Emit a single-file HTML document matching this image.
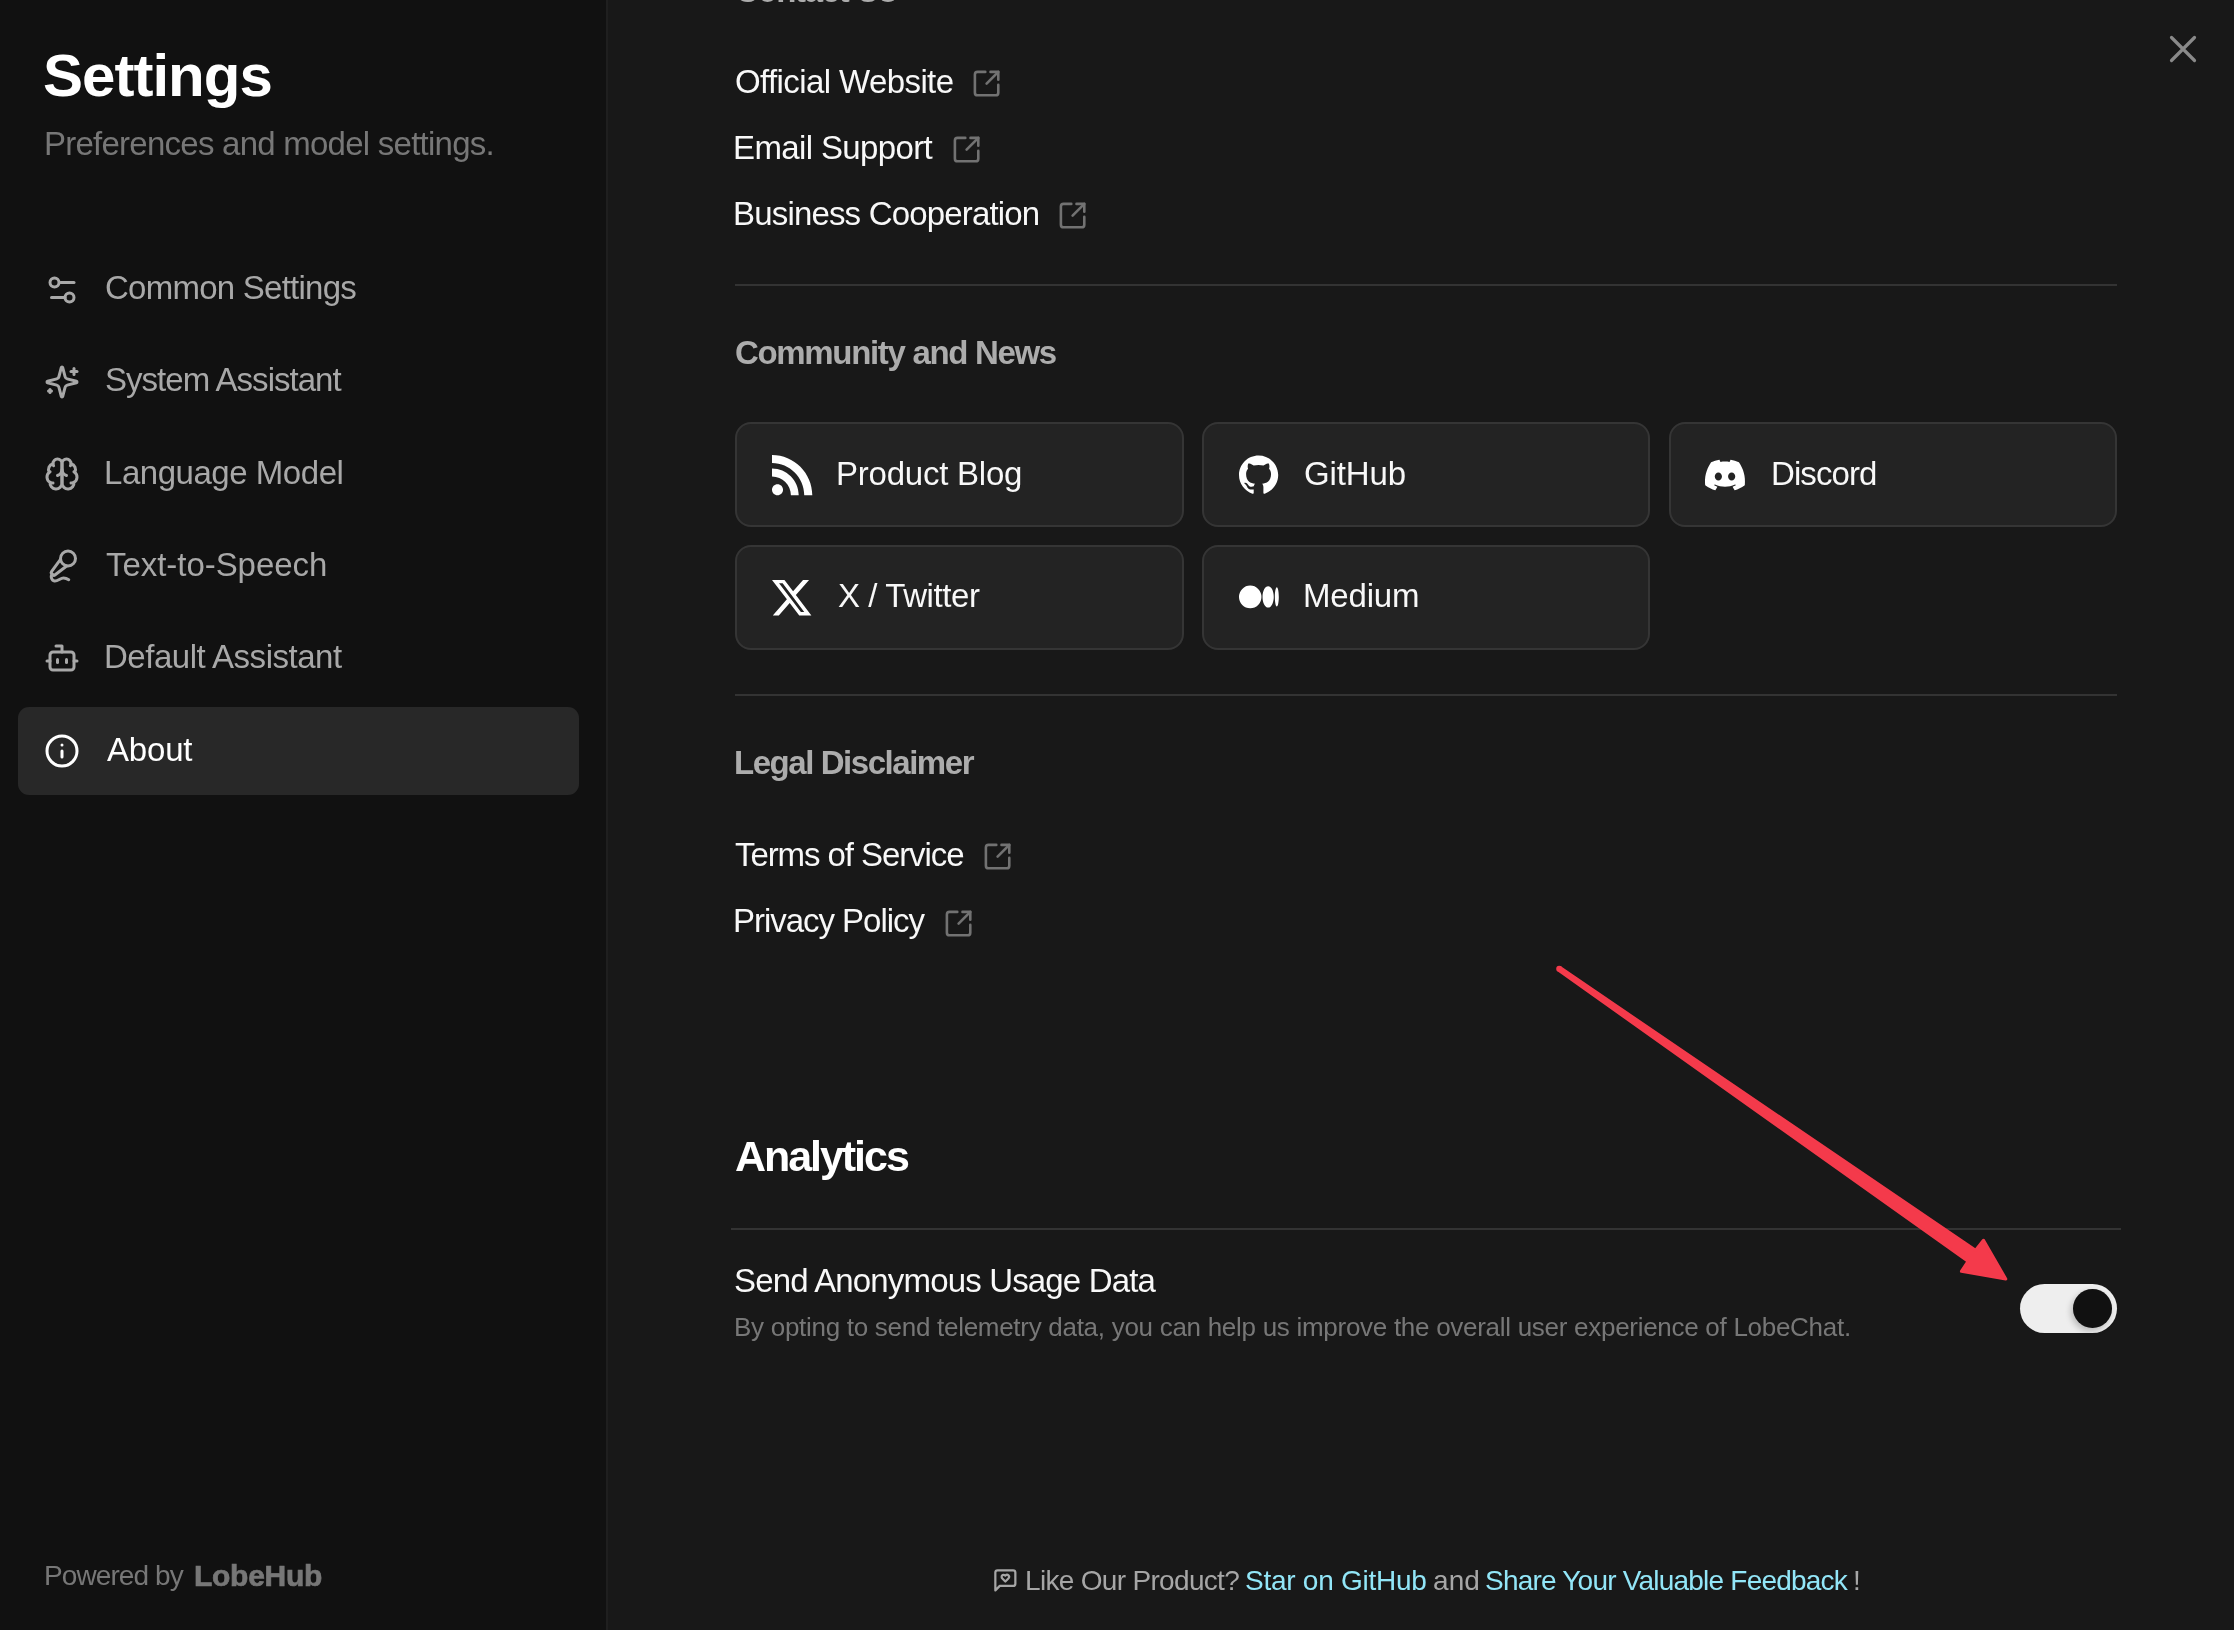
<!DOCTYPE html>
<html><head><meta charset="utf-8"><title>Settings</title>
<style>
html,body{margin:0;padding:0;width:2234px;height:1630px;overflow:hidden;background:#181818}
body{position:relative;font-family:"Liberation Sans",sans-serif}
.r{position:absolute}
.i{position:absolute;overflow:visible}
.t{position:absolute;white-space:nowrap;line-height:1;will-change:transform}
</style></head><body>
<div class="r" style="left:0;top:0;width:606px;height:1630px;background:#111111"></div>
<div class="r" style="left:606px;top:0;width:2px;height:1630px;background:#1f1f1f"></div>
<div class="t" style="left:42.90px;top:45.80px;font-size:60px;letter-spacing:-0.986px;color:#ffffff;font-weight:700;">Settings</div>
<div class="t" style="left:43.50px;top:127.05px;font-size:33px;letter-spacing:-0.753px;color:#777777;">Preferences and model settings.</div>
<div class="r" style="left:18px;top:707px;width:561px;height:88px;background:#282828;border-radius:11px"></div>
<svg class="i" style="left:43.6px;top:271.5px;" width="36.0" height="36.0" viewBox="0 0 24 24" fill="none" stroke="#a8a8a8" stroke-width="2" stroke-linecap="round" stroke-linejoin="round"><path d="M20 7h-9"/><path d="M14 17H5"/><circle cx="17" cy="17" r="3"/><circle cx="7" cy="7" r="3"/></svg>
<div class="t" style="left:104.90px;top:270.95px;font-size:33px;letter-spacing:-0.750px;color:#a8a8a8;">Common Settings</div>
<svg class="i" style="left:43.6px;top:363.7px;" width="36.0" height="36.0" viewBox="0 0 24 24" fill="none" stroke="#a8a8a8" stroke-width="2" stroke-linecap="round" stroke-linejoin="round"><path d="M9.937 15.5A2 2 0 0 0 8.5 14.063l-6.135-1.582a.5.5 0 0 1 0-.962L8.5 9.936A2 2 0 0 0 9.937 8.5l1.582-6.135a.5.5 0 0 1 .963 0L14.063 8.5A2 2 0 0 0 15.5 9.937l6.135 1.581a.5.5 0 0 1 0 .964L15.5 14.063a2 2 0 0 0-1.437 1.437l-1.582 6.135a.5.5 0 0 1-.963 0z"/><path d="M20 3v4"/><path d="M22 5h-4"/><path d="M4 17v2"/><path d="M5 18H3"/></svg>
<div class="t" style="left:104.90px;top:363.30px;font-size:33px;letter-spacing:-0.973px;color:#a8a8a8;">System Assistant</div>
<svg class="i" style="left:43.6px;top:455.9px;" width="36.0" height="36.0" viewBox="0 0 24 24" fill="none" stroke="#a8a8a8" stroke-width="2" stroke-linecap="round" stroke-linejoin="round"><path d="M12 5a3 3 0 1 0-5.997.125 4 4 0 0 0-2.526 5.77 4 4 0 0 0 .556 6.588A4 4 0 1 0 12 18Z"/><path d="M12 5a3 3 0 1 1 5.997.125 4 4 0 0 1 2.526 5.77 4 4 0 0 1-.556 6.588A4 4 0 1 1 12 18Z"/><path d="M15 13a4.5 4.5 0 0 1-3-4 4.5 4.5 0 0 1-3 4"/><path d="M17.599 6.5a3 3 0 0 0 .399-1.375"/><path d="M6.003 5.125A3 3 0 0 0 6.401 6.5"/><path d="M3.477 10.896a4 4 0 0 1 .585-.396"/><path d="M19.938 10.5a4 4 0 0 1 .585.396"/><path d="M6 18a4 4 0 0 1-1.967-.516"/><path d="M19.967 17.484A4 4 0 0 1 18 18"/></svg>
<div class="t" style="left:103.90px;top:455.65px;font-size:33px;letter-spacing:-0.462px;color:#a8a8a8;">Language Model</div>
<svg class="i" style="left:43.6px;top:548.1px;" width="36.0" height="36.0" viewBox="0 0 24 24" fill="none" stroke="#a8a8a8" stroke-width="2" stroke-linecap="round" stroke-linejoin="round"><path d="m11 7.601-5.994 8.19a1 1 0 0 0 .1 1.298l.817.818a1 1 0 0 0 1.314.087L15.09 12"/><path d="M16.5 21.174C15.5 20.5 14.372 20 13 20c-2.058 0-3.928 2.356-6 2-2.072-.356-2.775-3.369-1.5-4.5"/><circle cx="16" cy="7" r="5"/></svg>
<div class="t" style="left:105.90px;top:548.00px;font-size:33px;letter-spacing:-0.046px;color:#a8a8a8;">Text-to-Speech</div>
<svg class="i" style="left:43.6px;top:640.3px;" width="36.0" height="36.0" viewBox="0 0 24 24" fill="none" stroke="#a8a8a8" stroke-width="2" stroke-linecap="round" stroke-linejoin="round"><path d="M12 8V4H8"/><rect width="16" height="12" x="4" y="8" rx="2"/><path d="M2 14h2"/><path d="M20 14h2"/><path d="M15 13v2"/><path d="M9 13v2"/></svg>
<div class="t" style="left:103.90px;top:640.35px;font-size:33px;letter-spacing:-0.481px;color:#a8a8a8;">Default Assistant</div>
<svg class="i" style="left:43.6px;top:732.5px;" width="36.0" height="36.0" viewBox="0 0 24 24" fill="none" stroke="#ffffff" stroke-width="2" stroke-linecap="round" stroke-linejoin="round"><circle cx="12" cy="12" r="10"/><path d="M12 16v-4"/><path d="M12 8h.01"/></svg>
<div class="t" style="left:106.90px;top:732.70px;font-size:33px;letter-spacing:-0.175px;color:#ffffff;">About</div>
<div class="t" style="left:43.80px;top:1562.20px;font-size:28px;letter-spacing:-0.900px;color:#777777;">Powered by</div>
<div class="t" style="left:193.70px;top:1560.50px;font-size:30px;letter-spacing:-0.267px;color:#777777;font-weight:700;-webkit-text-stroke:0.7px #777777;">LobeHub</div>
<div class="r" style="left:608px;top:0;width:1626px;height:1630px;background:#181818"></div>
<svg class="i" style="left:2160px;top:26px" width="46" height="46" viewBox="0 0 46 46" stroke="#8a8a8a" stroke-width="3.2" stroke-linecap="round"><path d="M11.5 11.5 34.5 34.5M34.5 11.5 11.5 34.5"/></svg>
<div class="t" style="left:735.10px;top:-26.05px;font-size:33px;letter-spacing:-1.344px;color:#acacac;font-weight:700;">Contact Us</div>
<div class="t" style="left:735.40px;top:65.15px;font-size:33px;letter-spacing:-0.600px;color:#f8f8f8;">Official Website</div>
<svg class="i" style="left:970.9px;top:68.2px;" width="31.2" height="31.2" viewBox="0 0 24 24" fill="none" stroke="#727272" stroke-width="2" stroke-linecap="round" stroke-linejoin="round"><path d="M21 13v6a2 2 0 0 1-2 2H5a2 2 0 0 1-2-2V5a2 2 0 0 1 2-2h6"/><path d="m21 3-9 9"/><path d="M15 3h6v6"/></svg>
<div class="t" style="left:733.40px;top:131.35px;font-size:33px;letter-spacing:-0.633px;color:#f8f8f8;">Email Support</div>
<svg class="i" style="left:950.8px;top:134.4px;" width="31.2" height="31.2" viewBox="0 0 24 24" fill="none" stroke="#727272" stroke-width="2" stroke-linecap="round" stroke-linejoin="round"><path d="M21 13v6a2 2 0 0 1-2 2H5a2 2 0 0 1-2-2V5a2 2 0 0 1 2-2h6"/><path d="m21 3-9 9"/><path d="M15 3h6v6"/></svg>
<div class="t" style="left:733.40px;top:197.15px;font-size:33px;letter-spacing:-0.826px;color:#f8f8f8;">Business Cooperation</div>
<svg class="i" style="left:1057.4px;top:200.2px;" width="31.2" height="31.2" viewBox="0 0 24 24" fill="none" stroke="#727272" stroke-width="2" stroke-linecap="round" stroke-linejoin="round"><path d="M21 13v6a2 2 0 0 1-2 2H5a2 2 0 0 1-2-2V5a2 2 0 0 1 2-2h6"/><path d="m21 3-9 9"/><path d="M15 3h6v6"/></svg>
<div class="r" style="left:735px;top:284px;width:1382px;height:2px;background:#333333"></div>
<div class="t" style="left:735.10px;top:335.75px;font-size:33px;letter-spacing:-1.329px;color:#acacac;font-weight:700;">Community and News</div>
<div class="r" style="left:735px;top:422px;width:448.5px;height:105px;background:#232323;border:2px solid #353535;border-radius:16px;box-sizing:border-box"></div>
<svg class="i" style="left:771.6px;top:454.6px;" width="40.3" height="40.3" viewBox="0 0 24 24" fill="#ffffff" ><path d="M19.199 24C19.199 13.467 10.533 4.8 0 4.8V0c13.165 0 24 10.835 24 24h-4.801zM3.291 17.415c1.814 0 3.293 1.479 3.293 3.295 0 1.813-1.485 3.29-3.301 3.29C1.47 24 0 22.526 0 20.71s1.475-3.294 3.291-3.295zM15.909 24h-4.665c0-6.169-5.075-11.245-11.244-11.245V8.09c8.727 0 15.909 7.184 15.909 15.91z"/></svg>
<div class="t" style="left:836.00px;top:457.15px;font-size:33px;letter-spacing:-0.227px;color:#f8f8f8;">Product Blog</div>
<div class="r" style="left:1201.5px;top:422px;width:448.5px;height:105px;background:#232323;border:2px solid #353535;border-radius:16px;box-sizing:border-box"></div>
<svg class="i" style="left:1239.0px;top:455.0px;" width="39.2" height="39.2" viewBox="0 0 24 24" fill="#ffffff" ><path d="M12 .297c-6.63 0-12 5.373-12 12 0 5.303 3.438 9.8 8.205 11.385.6.113.82-.258.82-.577 0-.285-.01-1.04-.015-2.04-3.338.724-4.042-1.61-4.042-1.61C4.422 18.07 3.633 17.7 3.633 17.7c-1.087-.744.084-.729.084-.729 1.205.084 1.838 1.236 1.838 1.236 1.07 1.835 2.809 1.305 3.495.998.108-.776.417-1.305.76-1.605-2.665-.3-5.466-1.332-5.466-5.93 0-1.31.465-2.38 1.235-3.22-.135-.303-.54-1.523.105-3.176 0 0 1.005-.322 3.3 1.23.96-.267 1.98-.399 3-.405 1.02.006 2.04.138 3 .405 2.28-1.552 3.285-1.23 3.285-1.23.645 1.653.24 2.873.12 3.176.765.84 1.23 1.91 1.23 3.22 0 4.61-2.805 5.625-5.475 5.92.42.36.81 1.096.81 2.22 0 1.606-.015 2.896-.015 3.286 0 .315.21.69.825.57C20.565 22.092 24 17.592 24 12.297c0-6.627-5.373-12-12-12"/></svg>
<div class="t" style="left:1303.50px;top:457.15px;font-size:33px;letter-spacing:-0.140px;color:#f8f8f8;">GitHub</div>
<div class="r" style="left:1668.5px;top:422px;width:448.5px;height:105px;background:#232323;border:2px solid #353535;border-radius:16px;box-sizing:border-box"></div>
<svg class="i" style="left:1704.8px;top:454.5px;" width="40.0" height="40.0" viewBox="0 0 24 24" fill="#ffffff" ><path d="M20.317 4.3698a19.7913 19.7913 0 00-4.8851-1.5152.0741.0741 0 00-.0785.0371c-.211.3753-.4447.8648-.6083 1.2495-1.8447-.2762-3.68-.2762-5.4868 0-.1636-.3933-.4058-.8742-.6177-1.2495a.077.077 0 00-.0785-.037 19.7363 19.7363 0 00-4.8852 1.515.0699.0699 0 00-.0321.0277C.5334 9.0458-.319 13.5799.0992 18.0578a.0824.0824 0 00.0312.0561c2.0528 1.5076 4.0413 2.4228 5.9929 3.0294a.0777.0777 0 00.0842-.0276c.4616-.6304.8731-1.2952 1.226-1.9942a.076.076 0 00-.0416-.1057c-.6528-.2476-1.2743-.5495-1.8722-.8923a.077.077 0 01-.0076-.1277c.1258-.0943.2517-.1923.3718-.2914a.0743.0743 0 01.0776-.0105c3.9278 1.7933 8.18 1.7933 12.0614 0a.0739.0739 0 01.0785.0095c.1202.099.246.1981.3728.2924a.077.077 0 01-.0066.1276 12.2986 12.2986 0 01-1.873.8914.0766.0766 0 00-.0407.1067c.3604.698.7719 1.3628 1.225 1.9932a.076.076 0 00.0842.0286c1.961-.6067 3.9495-1.5219 6.0023-3.0294a.077.077 0 00.0313-.0552c.5004-5.177-.8382-9.6739-3.5485-13.6604a.061.061 0 00-.0312-.0286zM8.02 15.3312c-1.1825 0-2.1569-1.0857-2.1569-2.419 0-1.3332.9555-2.4189 2.157-2.4189 1.2108 0 2.1757 1.0952 2.1568 2.419 0 1.3332-.9555 2.4189-2.1569 2.4189zm7.9748 0c-1.1825 0-2.1569-1.0857-2.1569-2.419 0-1.3332.9554-2.4189 2.1569-2.4189 1.2108 0 2.1757 1.0952 2.1568 2.419 0 1.3332-.946 2.4189-2.1568 2.4189Z"/></svg>
<div class="t" style="left:1770.50px;top:457.15px;font-size:33px;letter-spacing:-0.917px;color:#f8f8f8;">Discord</div>
<div class="r" style="left:735px;top:545px;width:448.5px;height:105px;background:#232323;border:2px solid #353535;border-radius:16px;box-sizing:border-box"></div>
<svg class="i" style="left:771.6px;top:578.1px;" width="39.4" height="39.4" viewBox="0 0 24 24" fill="#ffffff" ><path d="M18.901 1.153h3.68l-8.04 9.19L24 22.846h-7.406l-5.8-7.584-6.638 7.584H.474l8.6-9.83L0 1.154h7.594l5.243 6.932ZM17.61 20.644h2.039L6.486 3.24H4.298Z"/></svg>
<div class="t" style="left:838.00px;top:579.25px;font-size:33px;letter-spacing:-0.420px;color:#f8f8f8;">X / Twitter</div>
<div class="r" style="left:1201.5px;top:545px;width:448.5px;height:105px;background:#232323;border:2px solid #353535;border-radius:16px;box-sizing:border-box"></div>
<svg class="i" style="left:1238.5px;top:577.2px;" width="39.8" height="39.8" viewBox="0 0 24 24" fill="#ffffff" ><path d="M13.54 12a6.8 6.8 0 01-6.77 6.82A6.8 6.8 0 010 12a6.8 6.8 0 016.77-6.82A6.8 6.8 0 0113.54 12zM20.96 12c0 3.54-1.51 6.42-3.38 6.42-1.87 0-3.39-2.88-3.39-6.42s1.52-6.42 3.39-6.42 3.38 2.88 3.38 6.42M24 12c0 3.17-.53 5.75-1.19 5.75-.66 0-1.19-2.58-1.19-5.75s.53-5.75 1.19-5.75C23.47 6.25 24 8.83 24 12z"/></svg>
<div class="t" style="left:1302.50px;top:579.25px;font-size:33px;letter-spacing:-0.180px;color:#f8f8f8;">Medium</div>
<div class="r" style="left:735px;top:694px;width:1382px;height:2px;background:#333333"></div>
<div class="t" style="left:734.30px;top:746.45px;font-size:33px;letter-spacing:-1.453px;color:#acacac;font-weight:700;">Legal Disclaimer</div>
<div class="t" style="left:735.40px;top:837.85px;font-size:33px;letter-spacing:-1.080px;color:#f8f8f8;">Terms of Service</div>
<svg class="i" style="left:982.1px;top:840.9px;" width="31.2" height="31.2" viewBox="0 0 24 24" fill="none" stroke="#727272" stroke-width="2" stroke-linecap="round" stroke-linejoin="round"><path d="M21 13v6a2 2 0 0 1-2 2H5a2 2 0 0 1-2-2V5a2 2 0 0 1 2-2h6"/><path d="m21 3-9 9"/><path d="M15 3h6v6"/></svg>
<div class="t" style="left:733.40px;top:904.45px;font-size:33px;letter-spacing:-1.031px;color:#f8f8f8;">Privacy Policy</div>
<svg class="i" style="left:942.6px;top:907.5px;" width="31.2" height="31.2" viewBox="0 0 24 24" fill="none" stroke="#727272" stroke-width="2" stroke-linecap="round" stroke-linejoin="round"><path d="M21 13v6a2 2 0 0 1-2 2H5a2 2 0 0 1-2-2V5a2 2 0 0 1 2-2h6"/><path d="m21 3-9 9"/><path d="M15 3h6v6"/></svg>
<div class="t" style="left:734.80px;top:1135.05px;font-size:43px;letter-spacing:-2.050px;color:#ffffff;font-weight:700;">Analytics</div>
<div class="r" style="left:731px;top:1228px;width:1390px;height:2px;background:#333333"></div>
<div class="t" style="left:733.80px;top:1263.55px;font-size:33px;letter-spacing:-0.846px;color:#f8f8f8;">Send Anonymous Usage Data</div>
<div class="t" style="left:733.80px;top:1314.20px;font-size:26px;letter-spacing:-0.284px;color:#777777;">By opting to send telemetry data, you can help us improve the overall user experience of LobeChat.</div>
<div class="r" style="left:2020px;top:1284px;width:97px;height:49px;border-radius:25px;background:#eeeeee"></div>
<div class="r" style="left:2073px;top:1289.2px;width:38.6px;height:38.6px;border-radius:50%;background:#111111;box-shadow:-2px 3px 6px rgba(0,0,0,0.22)"></div>
<svg class="i" style="left:991.5px;top:1567.3px;" width="26.7" height="26.7" viewBox="0 0 24 24" fill="none" stroke="#a6a6a6" stroke-width="2" stroke-linecap="round" stroke-linejoin="round"><path d="M21 15a2 2 0 0 1-2 2H7l-4 4V5a2 2 0 0 1 2-2h14a2 2 0 0 1 2 2z"/><path d="M14.8 7.5a1.84 1.84 0 0 0-2.6 0l-.2.3-.3-.3a1.84 1.84 0 1 0-2.4 2.8L12 13l2.7-2.7c.9-.9.8-2.1.1-2.8"/></svg>
<div class="t" style="left:1024.50px;top:1566.70px;font-size:28px;letter-spacing:-0.681px;color:#a6a6a6;">Like Our Product?</div>
<div class="t" style="left:1245.10px;top:1566.70px;font-size:28px;letter-spacing:-0.254px;color:#92e6f8;">Star on GitHub</div>
<div class="t" style="left:1433.20px;top:1566.70px;font-size:28px;letter-spacing:0.100px;color:#a6a6a6;">and</div>
<div class="t" style="left:1485.00px;top:1566.70px;font-size:28px;letter-spacing:-0.785px;color:#92e6f8;">Share Your Valuable Feedback</div>
<div class="t" style="left:1853.40px;top:1566.70px;font-size:28px;letter-spacing:0.000px;color:#a6a6a6;">!</div>
<svg class="i" style="left:0;top:0" width="2234" height="1630" viewBox="0 0 2234 1630"><polygon points="1560.1,967.6 1975.6,1250.3 1983.5,1240.3 2005.8,1278.9 1961.4,1271.3 1968.0,1261.4 1558.3,970.0" fill="#f43a4b" stroke="#f43a4b" stroke-width="3" stroke-linejoin="round"/><circle cx="1559.2" cy="968.8" r="3" fill="#f43a4b"/></svg>
</body></html>
